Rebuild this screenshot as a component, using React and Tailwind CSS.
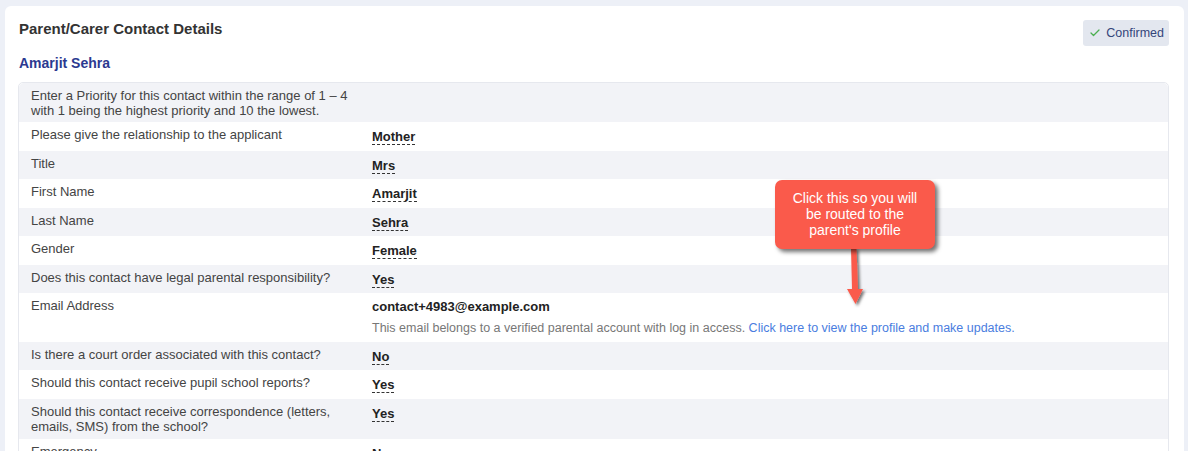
import React from 'react';
import { Check } from 'lucide-react';

// Detail rows shown in the contact table
const rows = [
    { label: 'Please give the relationship to the applicant', value: 'Mother' },
    { label: 'Title', value: 'Mrs' },
    { label: 'First Name', value: 'Amarjit' },
    { label: 'Last Name', value: 'Sehra' },
    { label: 'Gender', value: 'Female' },
    { label: 'Does this contact have legal parental responsibility?', value: 'Yes' },
    { label: 'Email Address', email: 'contact+4983@example.com' },
    { label: 'Is there a court order associated with this contact?', value: 'No' },
    { label: 'Should this contact receive pupil school reports?', value: 'Yes' },
    { label: 'Should this contact receive correspondence (letters, emails, SMS) from the school?', value: 'Yes' },
    { label: 'Emergency', value: 'No' }
];

function Value({ children }) {
    return (
        <span className="block w-fit mt-[2px] font-bold text-[#222] border-b border-dashed border-[#333] leading-[15px]">
            {children}
        </span>
    );
}

function Row({ row, shaded }) {
    return (
        <div className={`grid grid-cols-[341px_1fr] pl-[12px] pt-[5px] pb-[5.5px] leading-[15px] ${shaded ? 'bg-[#f2f3f7]' : 'bg-white'}`}>
            <div className="pr-[20px] text-[#444]">{row.label}</div>
            <div>
                {row.email ? (
                    <div>
                        <div className="mt-[1px] font-bold text-[#222]">{row.email}</div>
                        <div className="mt-[7px] text-[12.5px] text-[#777]">
                            This email belongs to a verified parental account with log in access.{' '}
                            <a className="text-[#4a7de0] cursor-pointer">Click here to view the profile and make updates.</a>
                        </div>
                    </div>
                ) : (
                    <Value>{row.value}</Value>
                )}
            </div>
        </div>
    );
}

// Annotation callout pointing at the profile link
function Callout() {
    return (
        <div className="absolute left-[756px] top-[97px] w-[160px]">
            <div className="relative z-10 h-[69px] rounded-[7px] bg-[#fa5a4b] pt-[10px] text-center text-[14px] leading-[16px] text-white shadow-[3px_3px_4px_rgba(0,0,0,0.55)]">
                Click this so you will<br />be routed to the<br />parent's profile
            </div>
            <svg className="absolute left-[66px] top-[66px]" width="30" height="62" viewBox="0 0 30 62">
                <defs>
                    <filter id="sh" x="-50%" y="-20%" width="200%" height="150%">
                        <feDropShadow dx="2" dy="2" stdDeviation="1.5" floodColor="#000" floodOpacity="0.55" />
                    </filter>
                </defs>
                <path d="M10 2 L15.5 2 L17 43 L22 43 L14.5 58 L6 43 L11 43 Z" fill="#fa5a4b" filter="url(#sh)" />
            </svg>
        </div>
    );
}

export default function App() {
    return (
        <div className="min-h-[451px] bg-[#edf0f7] pt-[6px] pl-[5px] pr-[4px] text-[13px]" style={{ fontFamily: '"Liberation Sans", Arial, sans-serif' }}>
            <div className="bg-white rounded-t-[6px] pl-[13px] pr-[15px] pt-[14px] pb-6 min-h-[460px]">
                <div className="flex items-start justify-between">
                    <h2 className="text-[15px] leading-[18px] font-bold text-[#333] pl-[1px]">Parent/Carer Contact Details</h2>
                    <span className="flex items-center gap-[5px] h-[26px] pl-[6px] pr-[5px] rounded-[3px] bg-[#e3e7ef] text-[12.5px] text-[#34457a]">
                        <Check className="w-[12px] h-[12px] text-[#4caf50]" strokeWidth={2.5} />
                        Confirmed
                    </span>
                </div>

                <h3 className="mt-[8px] mb-[10px] text-[14px] leading-[18px] font-bold text-[#2b3990] pl-[1px]">Amarjit Sehra</h3>

                <div className="relative rounded-t-[5px] border border-[#e6e8ee]">
                    <div className="bg-[#f2f3f7] rounded-t-[5px] pl-[12px] pt-[5px] pb-[4px] text-[#444] leading-[15px]">
                        Enter a Priority for this contact within the range of 1 – 4<br />
                        with 1 being the highest priority and 10 the lowest.
                    </div>
                    {rows.map((row, i) => (
                        <Row key={row.label} row={row} shaded={i % 2 === 1} />
                    ))}
                    <Callout />
                </div>
            </div>
        </div>
    );
}
